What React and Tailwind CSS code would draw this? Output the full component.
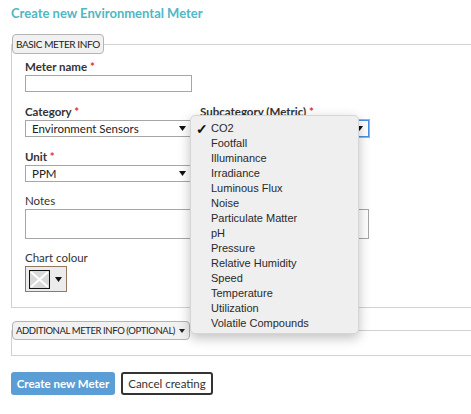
import React from 'react'

const font = { fontFamily: 'Lato, "Open Sans", sans-serif' }

const options = [
  'CO2', 'Footfall', 'Illuminance', 'Irradiance', 'Luminous Flux', 'Noise',
  'Particulate Matter', 'pH', 'Pressure', 'Relative Humidity', 'Speed',
  'Temperature', 'Utilization', 'Volatile Compounds',
]

function Arrow() {
  return (
    <svg width="7" height="5" viewBox="0 0 7 5" className="shrink-0">
      <path d="M0 0h7L3.5 5z" fill="#111" />
    </svg>
  )
}

function Select({ value, focused }) {
  return (
    <div
      className={`h-[17px] flex items-center justify-between pl-[6px] pr-[5px] text-[11.5px] text-[#222] bg-white border ${
        focused ? 'border-[#4a8ee6] shadow-[0_0_0_1px_#8ab8f0]' : 'border-[#a6a6a6]'
      }`}
    >
      <span className="leading-none">{value}</span>
      <Arrow />
    </div>
  )
}

function Label({ children, req, bold = true }) {
  return (
    <div className={`h-[16px] leading-[16px] text-[11.5px] text-[#333] ${bold ? 'font-bold' : ''}`}>
      {children}
      {req && <span className="text-[#e5322d]"> *</span>}
    </div>
  )
}

export default function App() {
  return (
    <div className="relative w-[471px] h-[414px] bg-white overflow-hidden" style={font}>
      <h1 className="pl-[11px] pt-[4px] h-[34px] text-[13px] font-bold text-[#4fb7c5] leading-[18px]">
        Create new Environmental Meter
      </h1>

      {/* Basic meter info */}
      <fieldset className="ml-[11px] w-[480px] border border-[#d2d2d2]">
        <legend className="h-[20px] px-[3px] border border-[#b4b4b4] rounded-[4px] bg-[#f1f1f1] text-[10px] tracking-[-0.4px] text-[#222] leading-[18px]">
          BASIC METER INFO
        </legend>
        <div className="pl-[13px] pt-[5px] pb-[15px]">
          <Label req>Meter name</Label>
          <div className="w-[167px] h-[17px] border border-[#a6a6a6] bg-white" />

          <div className="mt-[12px] flex gap-[8px] w-[344px]">
            <div className="w-[167px]">
              <Label req>Category</Label>
              <Select value="Environment Sensors" />
            </div>
            <div className="w-[169px]">
              <Label req>Subcategory (Metric)</Label>
              <Select value="CO2" focused />
            </div>
          </div>

          <div className="mt-[12px] w-[167px]">
            <Label req>Unit</Label>
            <Select value="PPM" />
          </div>

          <div className="mt-[11px]">
            <Label bold={false}>Notes</Label>
            <div className="w-[344px] h-[30px] border border-[#a6a6a6] bg-white" />
          </div>

          <div className="mt-[11px]">
            <Label bold={false}>Chart colour</Label>
            <div className="w-[42px] h-[26px] border border-[#8f7a62] bg-[#ececec] flex items-center pl-[3px] gap-[5px]">
              <svg width="21" height="19" viewBox="0 0 21 19">
                <rect x="0.5" y="0.5" width="20" height="18" fill="#d8d8d8" stroke="#111" />
                <path d="M2 2L19 17M19 2L2 17" stroke="#fff" strokeWidth="2" />
              </svg>
              <Arrow />
            </div>
          </div>
        </div>
      </fieldset>

      {/* Additional meter info */}
      <fieldset className="mt-[13px] ml-[11px] w-[480px] h-[35px] border border-[#d2d2d2]">
        <legend className="h-[19px] pl-[3px] pr-[4px] border border-[#b4b4b4] rounded-[4px] bg-[#f1f1f1] text-[9.5px] tracking-[-0.4px] text-[#222] leading-[17px]">
          <span className="inline-flex items-center gap-[4px]">
            ADDITIONAL METER INFO (OPTIONAL)
            <svg width="6" height="4" viewBox="0 0 6 4">
              <path d="M0 0h6L3 4z" fill="#222" />
            </svg>
          </span>
        </legend>
      </fieldset>

      <div className="mt-[16px] ml-[11px] flex gap-[6px]">
        <button className="w-[104px] h-[23px] rounded-[3px] bg-[#5b9ed6] text-white text-[11.5px] font-bold">
          Create new Meter
        </button>
        <button className="w-[92px] h-[23px] rounded-[3px] border-2 border-[#333] bg-white text-[#333] text-[11.5px]">
          Cancel creating
        </button>
      </div>

      {/* Open subcategory menu */}
      <div
        className="absolute left-[190px] top-[115px] w-[169px] h-[219px] rounded-[5px] bg-[#efefef] border border-[#d6d6d6] shadow-[0_4px_12px_rgba(0,0,0,0.25)] pt-[5px]"
        style={{ fontFamily: '"Liberation Sans", Arial, sans-serif' }}
      >
        {options.map((o, i) => (
          <div key={o} className="relative h-[15px] leading-[15px] pl-[20px] text-[11px] text-[#2a2a2a]">
            {i === 0 && <span className="absolute left-[5px] top-[1px] text-[14px] font-bold text-[#111]">✓</span>}
            {o}
          </div>
        ))}
      </div>
    </div>
  )
}
